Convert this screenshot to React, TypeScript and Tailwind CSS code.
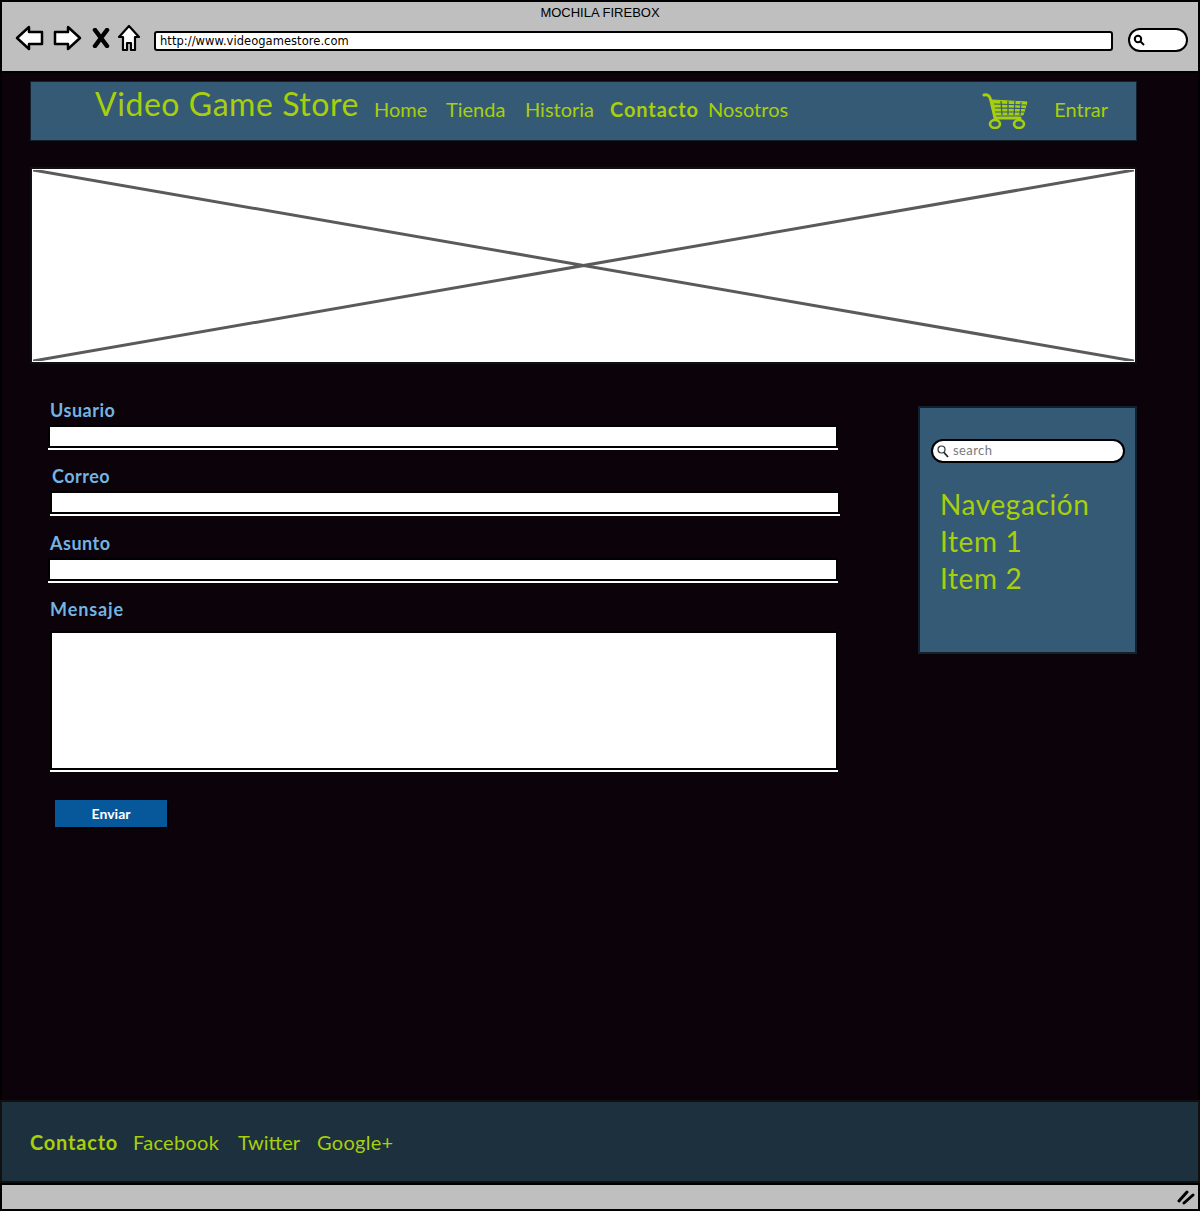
const font = "font-['Lato','Noto_Sans',sans-serif]";

const BrowserBar = () => {
  return (
    <div className="h-[73px] border-2 border-black bg-[#bfbfbf] flex flex-col">
      <div className="h-[21px] pt-[3px] text-center text-[13px] leading-[16px] text-black font-['Liberation_Sans',sans-serif]">
        MOCHILA FIREBOX
      </div>
      <div className="flex items-center pl-[13px] pr-[9px] h-[30px]">
        <svg width="30" height="26" viewBox="0 0 30 26" className="shrink-0">
          <path d="M2 13 L14 2 L14 7 L27 7 L27 19 L14 19 L14 24 Z" fill="#fff" stroke="#000" strokeWidth="2.5" strokeLinejoin="round" />
        </svg>
        <svg width="30" height="26" viewBox="0 0 30 26" className="ml-[7px] shrink-0">
          <path d="M28 13 L16 2 L16 7 L3 7 L3 19 L16 19 L16 24 Z" fill="#fff" stroke="#000" strokeWidth="2.5" strokeLinejoin="round" />
        </svg>
        <svg width="18" height="20" viewBox="0 0 18 20" className="ml-[10px] shrink-0">
          <path d="M3 2 L15 18 M15 2 L3 18" stroke="#000" strokeWidth="4.5" strokeLinecap="round" />
        </svg>
        <svg width="24" height="28" viewBox="0 0 24 28" className="ml-[7px] shrink-0">
          <path d="M12 2 L22 13 L18 13 L18 26 L14 26 L14 19 L10 19 L10 26 L6 26 L6 13 L2 13 Z" fill="#fff" stroke="#000" strokeWidth="2.2" strokeLinejoin="round" />
        </svg>
        <div className="ml-[13px] mt-[6px] h-[20px] w-[959px] shrink-0 rounded-[3px] border-2 border-black bg-white pl-[4px] text-[11.5px] leading-[16px] tracking-[0.05px] text-black font-['DejaVu_Sans',sans-serif]">
          http://www.videogamestore.com
        </div>
        <div className="ml-[15px] mt-[4px] h-[24px] w-[60px] shrink-0 rounded-full border-2 border-black bg-white flex items-center pl-[3px]">
          <svg width="12" height="12" viewBox="0 0 12 12">
            <circle cx="5" cy="5" r="3.2" fill="none" stroke="#000" strokeWidth="2" />
            <path d="M7.5 7.5 L11 11" stroke="#000" strokeWidth="2" />
          </svg>
        </div>
      </div>
    </div>
  );
};

const CartIcon = () => {
  return (
    <svg width="46" height="36" viewBox="0 0 46 36" fill="none" stroke="#a8cf0c">
      <path d="M2 2 C7 1 8 4 9 8 L13 25 L38 25" strokeWidth="3" strokeLinecap="round" />
      <path d="M10 7 L45 9 L41 22 L14 22 Z" fill="#a8cf0c" strokeWidth="1" />
      <path d="M12 11 L44 12 M13 15 L43 15.5 M13 19 L42 19 M19 8 L20 22 M26 8 L26 22 M33 8 L32 22 M39 9 L38 22" stroke="#355a75" strokeWidth="1.2" />
      <ellipse cx="13" cy="31" rx="5" ry="4" strokeWidth="2.6" />
      <ellipse cx="37" cy="31" rx="5" ry="4" strokeWidth="2.6" />
    </svg>
  );
};

const Header = () => {
  return (
    <div className="h-[60px] border border-[#14202c] bg-[#355a75] flex items-center pb-[5px] text-[#a8cf0c] text-[20px]">
      <h1 className="ml-[64px] w-[279px] text-[32px] leading-[44px] tracking-[0.55px] -mt-[9px]">Video Game Store</h1>
      <a className="w-[72px]">Home</a>
      <a className="w-[79px]">Tienda</a>
      <a className="w-[85px]">Historia</a>
      <a className="w-[98px] font-bold tracking-[0.9px]">Contacto</a>
      <a>Nosotros</a>
      <div className="ml-auto mr-[26px] mt-[5px]">
        <CartIcon />
      </div>
      <a className="mr-[28px]">Entrar</a>
    </div>
  );
};

const Hero = () => {
  return (
    <div className="mt-[26px] h-[197px] border-2 border-[#101010] bg-white p-[1px]">
      <svg width="100%" height="100%" viewBox="0 0 1100 190" preserveAspectRatio="none">
        <path d="M0 0 L1100 190 M1100 0 L0 190" stroke="#5a5a5a" strokeWidth="3" />
      </svg>
    </div>
  );
};

const Field = ({ label, offset }: { label: string; offset: string }) => {
  return (
    <div className={offset}>
      <label className="block h-[24px] pl-[2px] text-[18px] leading-[22px] font-bold tracking-[0.5px] text-[#74b4e0]">
        {label}
      </label>
      <div className="mt-[2px] h-[23px] bg-white border-2 border-black shadow-[0_2px_0_#fff]" />
    </div>
  );
};

const ContactForm = () => {
  return (
    <div className="w-[790px] ml-[18px] flex flex-col">
      <Field label="Usuario" offset="h-[66px]" />
      <Field label="Correo" offset="h-[67px] ml-[2px] -mr-[2px]" />
      <Field label="Asunto" offset="h-[66px]" />
      <label className="block h-[33px] pl-[2px] text-[18px] leading-[22px] font-bold tracking-[0.9px] text-[#74b4e0]">
        Mensaje
      </label>
      <div className="ml-[2px] h-[139px] bg-white border-2 border-black shadow-[0_2px_0_#fff]" />
      <button className="mt-[30px] ml-[7px] h-[27px] w-[112px] bg-[#07579b] text-white text-[14px] font-bold shadow-[2px_2px_0_#000]">
        Enviar
      </button>
    </div>
  );
};

const Sidebar = () => {
  return (
    <div className="mt-[7px] h-[248px] w-[219px] border-2 border-[#14202c] bg-[#355a75] pl-[11px] pr-[10px] pt-[31px] text-[#a8cf0c]">
      <div className="h-[24px] rounded-full border-2 border-black bg-white flex items-center pl-[4px] gap-[4px] text-[13px] text-[#7a7a7a]">
        <svg width="12" height="13" viewBox="0 0 12 13" fill="none">
          <circle cx="4.5" cy="4.5" r="3.5" stroke="#333" strokeWidth="1.2" />
          <path d="M7 7.5 L11 12" stroke="#222" strokeWidth="1.8" />
        </svg>
        <span className="tracking-[0.4px]">search</span>
      </div>
      <ul className="mt-[23px] ml-[9px] text-[28px] leading-[37px] tracking-[0.6px]">
        <li>Navegación</li>
        <li>Item 1</li>
        <li>Item 2</li>
      </ul>
    </div>
  );
};

const Footer = () => {
  return (
    <div className="h-[83px] border-2 border-[#101010] bg-[#1d303d] flex items-center pl-[28px] text-[20px] text-[#a8cf0c]">
      <a className="w-[103px] font-bold tracking-[0.8px]">Contacto</a>
      <a className="w-[105px] tracking-[0.3px]">Facebook</a>
      <a className="w-[79px]">Twitter</a>
      <a className="tracking-[0.3px]">Google+</a>
    </div>
  );
};

const StatusBar = () => {
  return (
    <div className="h-[28px] border-2 border-black bg-[#bfbfbf] flex items-center justify-end pr-[3px]">
      <svg width="18" height="16" viewBox="0 0 18 16">
        <path d="M2 12 L10 3 M7 14 L16 6" stroke="#000" strokeWidth="3" strokeLinecap="round" />
      </svg>
    </div>
  );
};

export default function App() {
  return (
    <div className={`w-[1200px] h-[1211px] bg-[#0b020a] flex flex-col ${font}`}>
      <BrowserBar />
      <main className="flex-1 pl-[28px] pt-[8px] pr-[61px] border-x-2 border-black">
        <Header />
        <Hero />
        <div className="mt-[35px] flex justify-between">
          <ContactForm />
          <Sidebar />
        </div>
      </main>
      <Footer />
      <StatusBar />
    </div>
  );
}
